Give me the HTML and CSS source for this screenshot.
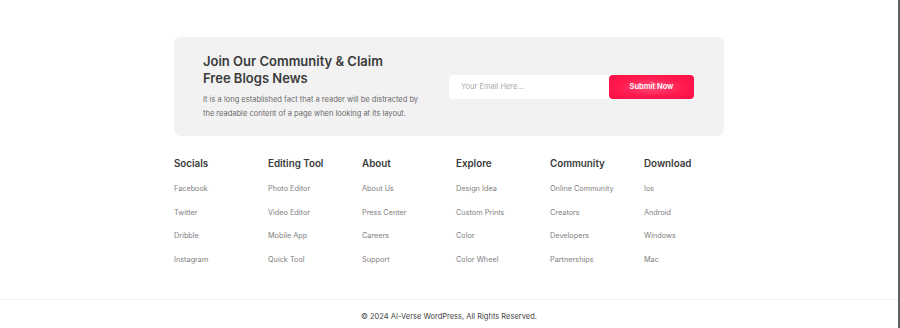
FILE: index.html
```html
<!DOCTYPE html>
<html lang="en">
<head>
  <meta charset="UTF-8">
  <meta name="viewport" content="width=device-width, initial-scale=1.0">
  <title>Footer</title>
  <link rel="stylesheet" href="styles.css">
</head>
<body>
  <div class="page">
    <footer class="footer">
      <div class="container">
        <!-- Newsletter -->
        <div class="newsletter">
          <div class="newsletter-text">
            <h2>Join Our Community &amp; Claim<br>Free Blogs News</h2>
            <p>It is a long established fact that a reader will be distracted by the readable content of a page when looking at its layout.</p>
          </div>
          <form class="newsletter-form" onsubmit="event.preventDefault()">
            <input type="email" placeholder="Your Email Here...">
            <button type="submit">Submit Now</button>
          </form>
        </div>

        <!-- Link columns -->
        <div class="links">
          <div class="col">
            <h4>Socials</h4>
            <a href="#">Facebook</a>
            <a href="#">Twitter</a>
            <a href="#">Dribble</a>
            <a href="#">Instagram</a>
          </div>
          <div class="col">
            <h4>Editing Tool</h4>
            <a href="#">Photo Editor</a>
            <a href="#">Video Editor</a>
            <a href="#">Mobile App</a>
            <a href="#">Quick Tool</a>
          </div>
          <div class="col">
            <h4>About</h4>
            <a href="#">About Us</a>
            <a href="#">Press Center</a>
            <a href="#">Careers</a>
            <a href="#">Support</a>
          </div>
          <div class="col">
            <h4>Explore</h4>
            <a href="#">Design Idea</a>
            <a href="#">Custom Prints</a>
            <a href="#">Color</a>
            <a href="#">Color Wheel</a>
          </div>
          <div class="col">
            <h4>Community</h4>
            <a href="#">Online Community</a>
            <a href="#">Creators</a>
            <a href="#">Developers</a>
            <a href="#">Partnerships</a>
          </div>
          <div class="col">
            <h4>Download</h4>
            <a href="#">Ios</a>
            <a href="#">Android</a>
            <a href="#">Windows</a>
            <a href="#">Mac</a>
          </div>
        </div>
      </div>

      <div class="copyright">
        <p>&copy; 2024 AI-Verse WordPress, All Rights Reserved.</p>
      </div>
    </footer>
  </div>
</body>
</html>
```

FILE: styles.css
```css
/* Global Styles */
body {
  font-family: Inter, "Noto Sans", sans-serif;
  background-color: #fff;
  color: #333;
  margin: 0;
  padding: 0;
}

.page {
  height: 328px;
  border-right: 2px solid #5f5f5f;
  overflow: hidden;
}

.container {
  width: 550px;
  margin: 0 auto;
  padding-top: 37px;
}

/* Newsletter */
.newsletter {
  background-color: #f2f2f2;
  border-radius: 7px;
  height: 99px;
  padding: 0 30px 0 29px;
  display: flex;
  align-items: center;
  justify-content: space-between;
  box-sizing: border-box;
}

.newsletter-text h2 {
  font-size: 13px;
  line-height: 17.5px;
  font-weight: 600;
  color: #3a3a3a;
  margin: 0 0 5px;
}

.newsletter-text p {
  font-size: 7.5px;
  line-height: 14px;
  color: #6a6a6a;
  margin: 0;
  width: 225px;
}

.newsletter-form {
  display: flex;
  background-color: #fff;
  border-radius: 4px;
  width: 245px;
  height: 24px;
}

.newsletter-form input {
  flex: 1;
  border: none;
  background: transparent;
  padding: 0 12px;
  font-family: inherit;
  font-size: 7.5px;
  color: #333;
  outline: none;
  min-width: 0;
}

.newsletter-form input::placeholder {
  color: #aaa;
}

.newsletter-form button {
  width: 85px;
  border: none;
  border-radius: 4px;
  background: radial-gradient(ellipse at center, #ff4d76 0%, #ff1a4f 55%, #ff0d45 100%);
  color: #fff;
  font-family: inherit;
  font-size: 7.5px;
  font-weight: 600;
  cursor: pointer;
}

/* Link columns */
.links {
  display: grid;
  grid-template-columns: repeat(6, 80px);
  column-gap: 14px;
  padding-top: 22px;
}

.col h4 {
  font-size: 9.8px;
  font-weight: 600;
  color: #3a3a3a;
  margin: 0 0 7px;
  line-height: 12px;
  white-space: nowrap;
}

.col a {
  display: block;
  font-size: 7.3px;
  line-height: 23.6px;
  color: #808080;
  text-decoration: none;
  white-space: nowrap;
}

.col a:hover {
  text-decoration: underline;
}

/* Copyright */
.copyright {
  margin-top: 28px;
  border-top: 1px solid #efefef;
  text-align: center;
}

.copyright p {
  margin: 0;
  padding-top: 11px;
  font-size: 7.5px;
  line-height: 12px;
  color: #444;
}
```
